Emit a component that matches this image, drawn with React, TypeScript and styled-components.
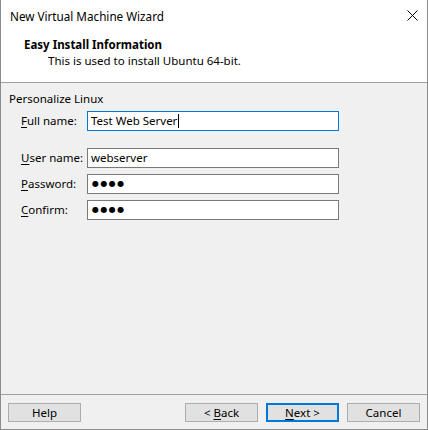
import React from "react";
import styled, { createGlobalStyle } from "styled-components";

const Global = createGlobalStyle`
  html, body { margin: 0; padding: 0; background: #f0f0f0; }
  body { font-family: "Noto Sans", "Open Sans", sans-serif; font-size: 11.5px; color: #000; }
  * { box-sizing: border-box; }
`;

const Window = styled.div`
  width: 428px;
  height: 430px;
  display: flex;
  flex-direction: column;
  background: #f0f0f0;
  border: 1px solid #8c8c8c;
  border-top: none;
`;

const TitleBar = styled.div`
  height: 31px;
  background: #fff;
  display: flex;
  align-items: center;
  justify-content: space-between;
  padding: 0 9px 0 9px;
  font-size: 11.7px;
  line-height: 16px;
`;

const CloseIcon = () => (
  <svg width="11" height="11" viewBox="0 0 11 11" style={{ marginBottom: 1 }}>
    <path d="M0.5 0.5 L10.5 10.5 M10.5 0.5 L0.5 10.5" stroke="#000" strokeWidth="1" />
  </svg>
);

const Header = styled.div`
  height: 52px;
  background: #fff;
  padding-top: 6px;
  display: flex;
  flex-direction: column;
  border-bottom: 1px solid #a0a0a0;
`;

const HeaderTitle = styled.div`
  font-weight: 700;
  line-height: 16px;
  padding-left: 23px;
`;

const HeaderSub = styled.div`
  line-height: 16px;
  padding-left: 47px;
`;

const Body = styled.div`
  flex: 1;
  padding: 8px 8px 0 8px;
  display: flex;
  flex-direction: column;
  border-bottom: 1px solid #a0a0a0;
`;

const GroupLabel = styled.div`
  line-height: 16px;
  height: 16px;
  margin-bottom: 4px;
`;

const Row = styled.div<{ $gap?: number }>`
  display: flex;
  align-items: center;
  height: 20px;
  margin-top: ${(p) => p.$gap ?? 0}px;
`;

const Label = styled.div`
  width: 78px;
  padding-left: 12px;
  line-height: 16px;
  u { text-decoration-thickness: 1px; text-underline-offset: 2px; }
`;

const Field = styled.div<{ $focused?: boolean }>`
  width: 252px;
  height: 20px;
  background: #fff;
  border: 1px solid ${(p) => (p.$focused ? "#0078d7" : "#7a7a7a")};
  display: flex;
  align-items: center;
  padding-left: 3px;
  line-height: 16px;
`;

const Caret = styled.span`
  display: inline-block;
  width: 1px;
  height: 14px;
  background: #000;
  margin-left: 1px;
`;

const Dots = styled.span`
  font-family: "DejaVu Sans", sans-serif;
  font-size: 8px;
  letter-spacing: 1.4px;
  line-height: 16px;
  padding-left: 1px;
`;

const Footer = styled.div`
  height: 34px;
  display: flex;
  align-items: flex-start;
  padding: 8px 7px 0 7px;
  gap: 8px;
`;

const Spacer = styled.div`
  flex: 1;
`;

const Button = styled.div<{ $default?: boolean }>`
  width: 73px;
  height: 19px;
  background: #e1e1e1;
  border: ${(p) => (p.$default ? "2px solid #0078d7" : "1px solid #adadad")};
  display: flex;
  align-items: center;
  justify-content: center;
  line-height: 16px;
  u { text-decoration-thickness: 1px; text-underline-offset: 2px; }
`;

export default function App() {
  return (
    <>
      <Global />
      <Window>
        <TitleBar>
          <span>New Virtual Machine Wizard</span>
          <CloseIcon />
        </TitleBar>
        <Header>
          <HeaderTitle>Easy Install Information</HeaderTitle>
          <HeaderSub>This is used to install Ubuntu 64-bit.</HeaderSub>
        </Header>
        <Body>
          <GroupLabel>Personalize Linux</GroupLabel>
          <Row>
            <Label>
              <u>F</u>ull name:
            </Label>
            <Field $focused>
              <span>Test Web Server</span>
              <Caret />
            </Field>
          </Row>
          <Row $gap={17}>
            <Label>
              <u>U</u>ser name:
            </Label>
            <Field>webserver</Field>
          </Row>
          <Row $gap={6}>
            <Label>
              <u>P</u>assword:
            </Label>
            <Field>
              <Dots>●●●●</Dots>
            </Field>
          </Row>
          <Row $gap={6}>
            <Label>
              <u>C</u>onfirm:
            </Label>
            <Field>
              <Dots>●●●●</Dots>
            </Field>
          </Row>
        </Body>
        <Footer>
          <Button>Help</Button>
          <Spacer />
          <Button>
            <span>
              &lt; <u>B</u>ack
            </span>
          </Button>
          <Button $default>
            <span>
              <u>N</u>ext &gt;
            </span>
          </Button>
          <Button>Cancel</Button>
        </Footer>
      </Window>
    </>
  );
}
